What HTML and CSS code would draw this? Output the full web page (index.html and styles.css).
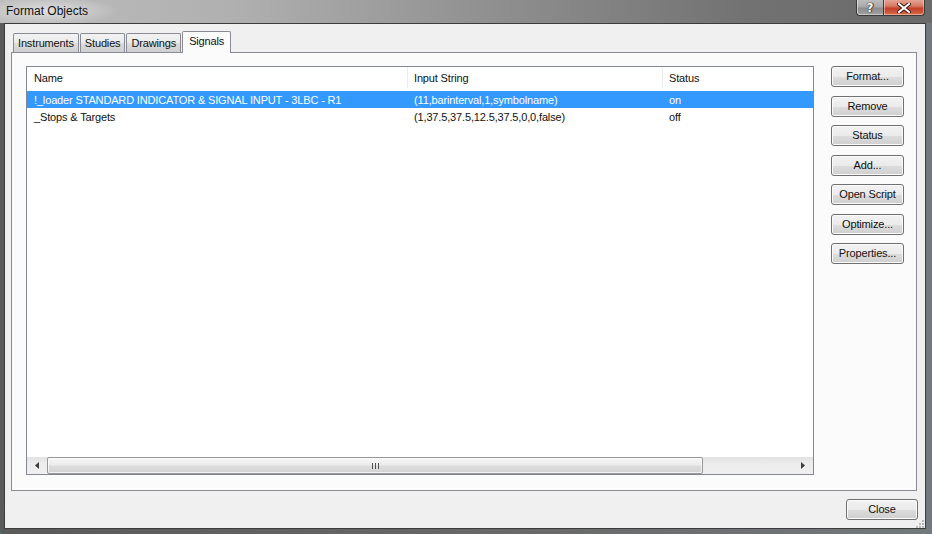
FILE: index.html
```html
<!DOCTYPE html>
<html lang="en">
<head>
<meta charset="utf-8">
<title>Format Objects</title>
<link rel="stylesheet" href="styles.css">
</head>
<body>
<div class="window">
  <div class="titlebar">
    <span class="title">Format Objects</span>
    <div class="caption-buttons">
      <span class="cap-btn cap-help">?</span>
      <span class="cap-btn cap-close">
        <svg width="14" height="10" viewBox="0 0 14 10"><path d="M2 1 L12 9 M12 1 L2 9" stroke="#3a1a14" stroke-width="4" stroke-linecap="square"/><path d="M2 1 L12 9 M12 1 L2 9" stroke="#fff" stroke-width="2" stroke-linecap="square"/></svg>
      </span>
    </div>
  </div>
  <div class="frame">
    <div class="client">
      <div class="tabstrip">
        <span class="tab">Instruments</span>
        <span class="tab">Studies</span>
        <span class="tab">Drawings</span>
        <span class="tab tab-active">Signals</span>
      </div>
      <div class="tabpage">
        <div class="listview">
          <div class="lv-head">
            <span class="col col-name">Name</span>
            <span class="col col-input">Input String</span>
            <span class="col col-status">Status</span>
          </div>
          <div class="lv-body">
            <div class="lv-row selected">
              <span class="col col-name">!_loader STANDARD INDICATOR &amp; SIGNAL INPUT - 3LBC - R1</span>
              <span class="col col-input">(11,barinterval,1,symbolname)</span>
              <span class="col col-status">on</span>
            </div>
            <div class="lv-row">
              <span class="col col-name">_Stops &amp; Targets</span>
              <span class="col col-input">(1,37.5,37.5,12.5,37.5,0,0,false)</span>
              <span class="col col-status">off</span>
            </div>
          </div>
          <div class="hscroll">
            <span class="sb-arrow">
              <svg width="4" height="7" viewBox="0 0 4 7"><polygon points="4,0 0,3.5 4,7" fill="#3c3c3c"/></svg>
            </span>
            <span class="sb-thumb"><span class="grip"></span></span>
            <span class="sb-track"></span>
            <span class="sb-arrow">
              <svg width="4" height="7" viewBox="0 0 4 7"><polygon points="0,0 4,3.5 0,7" fill="#3c3c3c"/></svg>
            </span>
          </div>
        </div>
        <div class="side-buttons">
          <button class="btn">Format...</button>
          <button class="btn">Remove</button>
          <button class="btn">Status</button>
          <button class="btn">Add...</button>
          <button class="btn">Open Script</button>
          <button class="btn">Optimize...</button>
          <button class="btn">Properties...</button>
        </div>
      </div>
      <div class="footer">
        <button class="btn btn-close">Close</button>
      </div>
      <svg class="size-grip" width="8" height="8" viewBox="0 0 8 8">
        <rect x="6" y="0" width="2" height="2" fill="#b8b8b8"/>
        <rect x="3" y="3" width="2" height="2" fill="#b8b8b8"/>
        <rect x="6" y="3" width="2" height="2" fill="#b8b8b8"/>
        <rect x="0" y="6" width="2" height="2" fill="#b8b8b8"/>
        <rect x="3" y="6" width="2" height="2" fill="#b8b8b8"/>
        <rect x="6" y="6" width="2" height="2" fill="#b8b8b8"/>
      </svg>
    </div>
  </div>
</div>
</body>
</html>
```
FILE: styles.css
```css
* { box-sizing: border-box; }

html, body {
  margin: 0;
  padding: 0;
}

body {
  width: 932px;
  height: 534px;
  overflow: hidden;
  background: #4f8595;
  font-family: "Liberation Sans", Arial, sans-serif;
  font-size: 11px;
  letter-spacing: -0.15px;
  color: #111;
}

.window {
  width: 932px;
  height: 534px;
  display: flex;
  flex-direction: column;
  background: linear-gradient(to right, #5a5a5a 0%, #6a6a6a 60%, #727a7d 100%);
  border-radius: 0 0 3px 3px;
}

/* caption */
.titlebar {
  height: 23px;
  flex: none;
  display: flex;
  justify-content: space-between;
  align-items: flex-start;
  padding: 0 7px 0 6px;
  background:
    radial-gradient(ellipse 70px 14px at 48px 11px, rgba(230,230,230,0.85), rgba(230,230,230,0) 100%),
    linear-gradient(to right, #bdbdbd 0%, #b0b0b0 25%, #8d8d8d 55%, #727272 80%, #6a6a6a 100%);
}

.title {
  font-family: "Liberation Sans", Arial, sans-serif;
  font-size: 12px;
  letter-spacing: 0;
  line-height: 23px;
  color: #111;
}

.caption-buttons {
  display: flex;
}

.cap-btn {
  height: 16px;
  display: flex;
  align-items: center;
  justify-content: center;
  border: 1px solid #3b3b3b;
  border-top: none;
}

.cap-help {
  width: 27px;
  border-radius: 0 0 0 4px;
  border-right: none;
  background: linear-gradient(#bdbdbd 0%, #a9a9a9 45%, #8c8c8c 55%, #a2a2a2 100%);
  box-shadow: inset 1px 0 0 rgba(255,255,255,0.5), inset 0 -1px 0 rgba(255,255,255,0.4);
  font-family: "DejaVu Sans", sans-serif;
  font-weight: bold;
  font-size: 12px;
  letter-spacing: 0;
  color: #fff;
  text-shadow: 0 0 1px #222, 0 0 1px #222, 1px 0 1px #333;
}

.cap-close {
  width: 42px;
  border-radius: 0 0 4px 0;
  background: linear-gradient(#e3a495 0%, #d77a63 40%, #c4412a 55%, #cf5a3c 85%, #e07a55 100%);
  box-shadow: inset 1px 0 0 rgba(255,255,255,0.45), inset -1px 0 0 rgba(255,255,255,0.35), inset 0 -1px 0 rgba(255,255,255,0.35);
}

/* window frame around the client area */
.frame {
  flex: 1;
  display: flex;
  padding: 0 6px 5px 4px;
}

.client {
  position: relative;
  flex: 1;
  display: flex;
  flex-direction: column;
  background: #f0f0f0;
  border: 1px solid #3c3c3c;
  padding: 7px 8px 7px 6px;
}

/* tabs */
.tabstrip {
  height: 21px;
  display: flex;
  align-items: flex-end;
  padding-left: 2px;
  gap: 1px;
  position: relative;
  z-index: 1;
}

.tab {
  height: 19px;
  display: flex;
  align-items: center;
  padding: 0 4px 1px 4px;
  border: 1px solid #898c95;
  border-bottom: none;
  border-radius: 2px 2px 0 0;
  background: linear-gradient(#f2f2f2 0%, #ebebeb 50%, #dddddd 51%, #cfcfcf 100%);
}

.tab-active {
  height: 22px;
  margin-bottom: -1px;
  padding: 0 6px 3px 6px;
  background: #fbfbfb;
}

.tabpage {
  height: 439px;
  display: flex;
  border: 1px solid #898c95;
  background: #fbfbfb;
  padding: 13px 12px 15px 14px;
}

/* list view */
.listview {
  flex: 1;
  display: flex;
  flex-direction: column;
  background: #fff;
  border: 1px solid #828790;
}

.lv-head,
.lv-row {
  display: grid;
  grid-template-columns: 381px 255px 1fr;
  align-items: center;
}

.lv-head {
  height: 22px;
  padding-bottom: 1px;
}

.lv-head .col {
  border-right: 1px solid #ececec;
  height: 100%;
  display: flex;
  align-items: center;
}

.lv-head .col-status {
  border-right: none;
}

.col-name { padding-left: 7px; }
.col-input { padding-left: 6px; }
.col-status { padding-left: 6px; }

.lv-body {
  flex: 1;
  padding-top: 2px;
}

.lv-row {
  height: 17px;
  white-space: nowrap;
}

.lv-row.selected {
  background: #3399ff;
  color: #fff;
}

/* horizontal scroll bar */
.hscroll {
  height: 17px;
  display: flex;
  background: linear-gradient(#e2e2e2 0%, #ececec 40%, #efefef 100%);
}

.sb-arrow {
  width: 20px;
  display: flex;
  align-items: center;
  justify-content: center;
}

.sb-thumb {
  width: 656px;
  display: flex;
  align-items: center;
  justify-content: center;
  border: 1px solid #979797;
  border-radius: 2px;
  background: linear-gradient(#f6f6f6 0%, #ececec 45%, #dcdcdc 55%, #d3d3d3 100%);
  box-shadow: inset 0 0 0 1px rgba(255,255,255,0.7);
}

.grip {
  width: 7px;
  height: 6px;
  background: repeating-linear-gradient(to right, #505050 0 1px, transparent 1px 3px);
}

.sb-track {
  flex: 1;
}

/* command buttons */
.side-buttons {
  width: 73px;
  margin-left: 17px;
  display: flex;
  flex-direction: column;
  gap: 8px;
}

.btn {
  font-family: "Liberation Sans", Arial, sans-serif;
  font-size: 11px;
  letter-spacing: -0.15px;
  color: #111;
  height: 21px;
  padding: 0 0 1px 0;
  border: 1px solid #707070;
  border-radius: 3px;
  background: linear-gradient(#f2f2f2 0%, #ebebeb 50%, #dddddd 51%, #cfcfcf 100%);
  box-shadow: inset 0 0 0 1px #fbfbfb;
}

.side-buttons .btn:nth-child(even) {
  margin-top: 1px;
}

.footer {
  display: flex;
  justify-content: flex-end;
  margin-top: 8px;
  margin-right: -1px;
}

.btn-close {
  width: 72px;
}

/* resize grip in the corner of the dialog */
.size-grip {
  position: absolute;
  right: 1px;
  bottom: 0px;
}
```
